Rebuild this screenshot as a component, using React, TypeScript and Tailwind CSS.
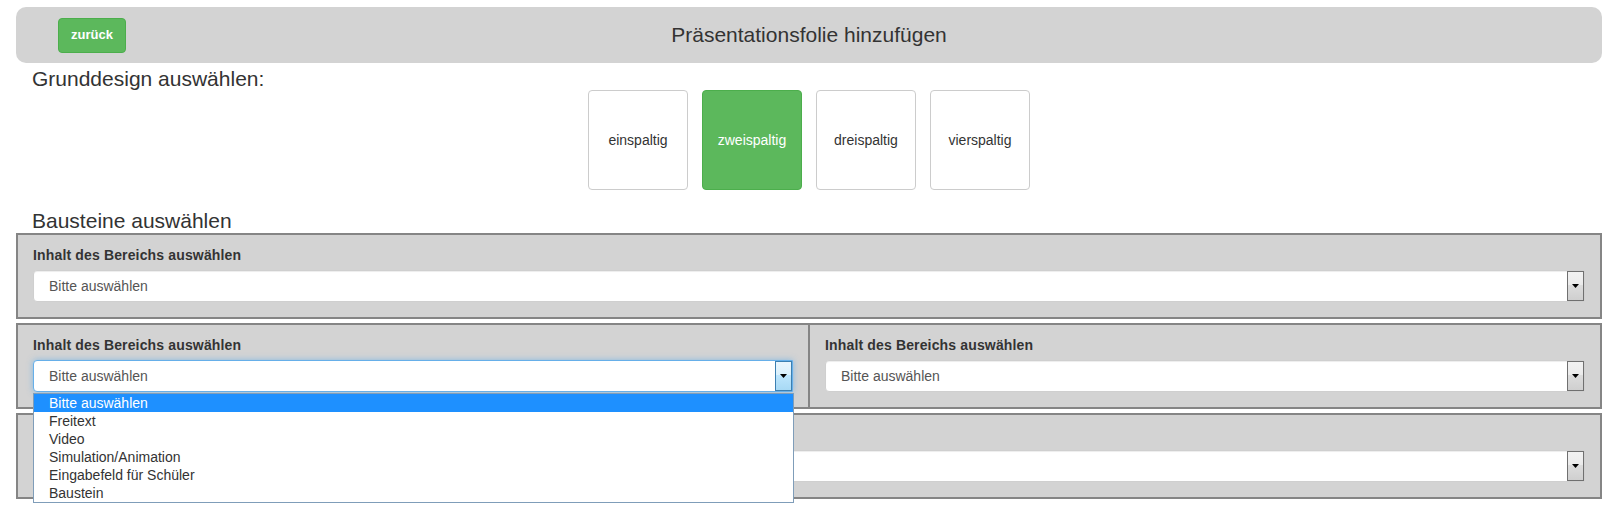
import React from "react";

const designs = ["einspaltig", "zweispaltig", "dreispaltig", "vierspaltig"];

const options = [
  "Bitte auswählen",
  "Freitext",
  "Video",
  "Simulation/Animation",
  "Eingabefeld für Schüler",
  "Baustein",
];

function ArrowBox({ focused }: { focused?: boolean }) {
  return (
    <div
      className={
        focused
          ? "flex w-[17px] shrink-0 items-center justify-center border border-[#3c7fb1] bg-[linear-gradient(#eaf6fd_0%,#d9f0fc_45%,#bee6fd_46%,#a7d9f5_100%)]"
          : "flex w-[17px] shrink-0 items-center justify-center border border-[#707070] bg-[linear-gradient(#f2f2f2_0%,#ebebeb_45%,#dddddd_46%,#cfcfcf_100%)]"
      }
    >
      <svg width="7" height="4" viewBox="0 0 7 4">
        <path d="M0 0h7L3.5 4z" fill="#000" />
      </svg>
    </div>
  );
}

function SelectBox({ focused, open, hidden }: { focused?: boolean; open?: boolean; hidden?: boolean }) {
  return (
    <div className="relative">
      <div
        className={
          focused
            ? "flex h-[32px] rounded-l-[4px] border border-[#66afe9] bg-white shadow-[0_0_6px_rgba(102,175,233,0.7)]"
            : "flex h-[32px] rounded-l-[4px] border border-[#cfcfcf] bg-white shadow-[inset_0_1px_1px_rgba(0,0,0,0.075)]"
        }
      >
        <div className="flex flex-1 items-center pl-[15px] text-[14px] text-[#555]">
          <span className={hidden ? "invisible" : ""}>Bitte auswählen</span>
        </div>
        <ArrowBox focused={focused} />
      </div>
      {open && (
        <ul className="absolute left-0 right-[-1px] top-full z-10 mt-[1px] border border-[#7f9db9] bg-white">
          {options.map((o, i) => (
            <li
              key={o}
              className={
                i === 0
                  ? "h-[18px] bg-[#1e90ff] pl-[15px] text-[14px] leading-[18px] text-white"
                  : "h-[18px] pl-[15px] text-[14px] leading-[18px] text-[#333]"
              }
            >
              {o}
            </li>
          ))}
        </ul>
      )}
    </div>
  );
}

// hidden: texts sit under the open dropdown list
function Area({ focused, open, hidden }: { focused?: boolean; open?: boolean; hidden?: boolean }) {
  return (
    <div className="px-[15px] pb-[15px] pt-[10px]">
      <div
        className={
          hidden
            ? "invisible mb-[5px] h-[20px] text-[14px] font-bold leading-[20px] tracking-[0.15px] text-[#333]"
            : "mb-[5px] h-[20px] text-[14px] font-bold leading-[20px] tracking-[0.15px] text-[#333]"
        }
      >
        Inhalt des Bereichs auswählen
      </div>
      <SelectBox focused={focused} open={open} hidden={hidden} />
    </div>
  );
}

export default function App() {
  return (
    <div className="h-[510px] w-full overflow-hidden bg-white font-['Liberation_Sans',Arial,sans-serif] text-[#333]">
      <div className="ml-4 mr-[18px] pt-[7px]">
        <div className="grid h-[56px] grid-cols-[1fr_auto_1fr] items-center rounded-[10px] bg-[#d3d3d3]">
          <div className="pl-[42px]">
            <button className="h-[35px] rounded-[4px] border border-[#4cae4c] bg-[#5cb85c] px-[12px] text-[13px] font-bold text-white">
              zurück
            </button>
          </div>
          <div className="pb-[2px] text-[21px] leading-[23px] text-[#333]">
            Präsentationsfolie hinzufügen
          </div>
          <div />
        </div>

        <div className="ml-4 mt-[5px] text-[21px] leading-[22px]">Grunddesign auswählen:</div>

        <div className="flex justify-center gap-[14px]">
          {designs.map((d) => (
            <div
              key={d}
              className={
                d === "zweispaltig"
                  ? "flex h-[100px] w-[100px] items-center justify-center rounded-[4px] border border-[#4cae4c] bg-[#5cb85c] text-[14px] text-white"
                  : "flex h-[100px] w-[100px] items-center justify-center rounded-[4px] border border-[#ccc] bg-white text-[14px] text-[#333]"
              }
            >
              {d}
            </div>
          ))}
        </div>

        <div className="ml-4 mt-[20px] text-[21px] leading-[22px]">Bausteine auswählen</div>

        <div className="mt-[1px] flex flex-col gap-[4px]">
          <div className="border-2 border-[#858585] bg-[#d3d3d3]">
            <Area />
          </div>
          <div className="relative z-10 flex border-2 border-[#858585] bg-[#d3d3d3]">
            <div className="flex-1 border-r-2 border-[#858585]">
              <Area focused open />
            </div>
            <div className="flex-1">
              <Area />
            </div>
          </div>
          <div className="border-2 border-[#858585] bg-[#d3d3d3]">
            <Area hidden />
          </div>
        </div>
      </div>
    </div>
  );
}
